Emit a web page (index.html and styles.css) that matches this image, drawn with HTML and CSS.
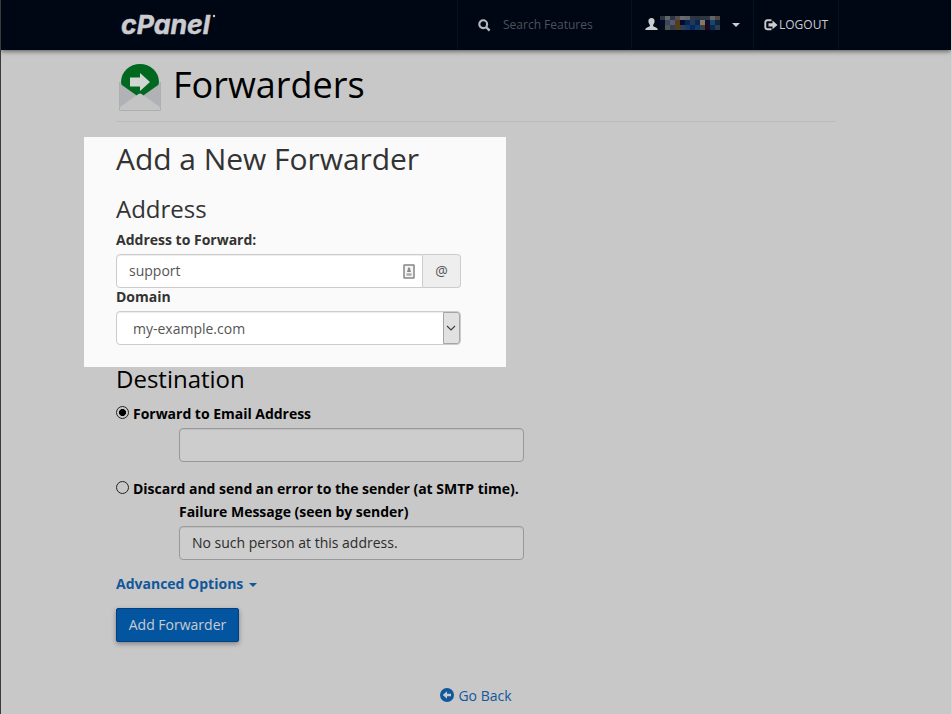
FILE: index.html
```html
<!DOCTYPE html>
<html lang="en">
<head>
<meta charset="utf-8">
<title>Forwarders</title>
<link rel="stylesheet" href="styles.css">
</head>
<body>
<header class="navbar">
  <svg class="logo" width="98" height="30" viewBox="0 0 98 30"><text x="1" y="24.500" textLength="89" lengthAdjust="spacingAndGlyphs">cPanel</text><circle cx="94" cy="7" r="1.200"/></svg>
  <div class="search">
    <svg width="13" height="13" viewBox="0 0 13 13"><circle cx="5.2" cy="5.2" r="3.9" fill="none" stroke="#b5b8bd" stroke-width="2.1"/><path d="M8 8l3.6 3.6" stroke="#b5b8bd" stroke-width="2.4"/></svg>
    <span>Search Features</span>
  </div>
  <div class="user">
    <svg width="13" height="12" viewBox="0 0 13 12"><path fill="#cbcccf" d="M6.500 0C8.600 0 9.800 1.400 9.600 3.400C9.400 5 8.700 6.200 8 7C8 8.300 8.800 8.700 10.300 9.200C12 9.800 12.700 10.300 12.700 12H.300C.300 10.300 1 9.800 2.700 9.200C4.200 8.700 5 8.300 5 7C4.300 6.200 3.600 5 3.400 3.400C3.200 1.400 4.400 0 6.500 0Z"/></svg>
    <svg class="mosaic" width="60" height="14" viewBox="0 0 12 14" preserveAspectRatio="none" shape-rendering="crispEdges">
      <g><path fill="#2b3340" d="M0 0h1v4H0zM7 0h1v4H7z"/><path fill="#616565" d="M1 0h1v4H1zM10 0h1v4h-1zM5 0h1v4H5z"/><path fill="#2c3647" d="M2 0h1v4H2zM8 0h2v4H8zM6 0h1v4H6z"/><path fill="#584b4d" d="M3 0h1v4H3z"/><path fill="#686c70" d="M4 0h1v4H4z"/><path fill="#50483e" d="M11 0h1v4h-1z"/></g>
      <g><path fill="#020b2c" d="M0 4h1v5H0zM4 4h1v5H4z"/><path fill="#3b4656" d="M1 4h1v5H1z"/><path fill="#515878" d="M2 4h1v5H2z"/><path fill="#573b12" d="M3 4h1v5H3z"/><path fill="#062653" d="M5 4h1v5H5zM7 4h1v5H7z"/><path fill="#243a54" d="M6 4h1v5H6z"/><path fill="#8b7759" d="M8 4h1v5H8z"/><path fill="#07112c" d="M9 4h1v5H9z"/><path fill="#1c436b" d="M10 4h1v5h-1z"/><path fill="#10243b" d="M11 4h1v5h-1z"/></g>
      <g><path fill="#050b1d" d="M0 9h1v5H0z"/><path fill="#4e5453" d="M1 9h1v5H1z"/><path fill="#343b4c" d="M2 9h1v5H2zM4 9h1v5H4z"/><path fill="#50401e" d="M3 9h1v5H3z"/><path fill="#123c68" d="M5 9h1v5H5zM7 9h1v5H7z"/><path fill="#08265c" d="M6 9h1v5H6z"/><path fill="#34414a" d="M8 9h1v5H8z"/><path fill="#20071c" d="M9 9h1v5H9z"/><path fill="#062b53" d="M10 9h1v5h-1z"/><path fill="#2b3c4c" d="M11 9h1v5h-1z"/></g>
    </svg>
    <i class="caret"></i>
  </div>
  <div class="logout">
    <svg width="14" height="12" viewBox="0 0 14 12"><path d="M7.500 1.300H3.500Q1.300 1.300 1.300 3.500v4.600Q1.300 10.300 3.500 10.300h4" fill="none" stroke="#cbcccf" stroke-width="1.900"/><path fill="#cbcccf" d="M4.500 4.200H8.500V1.500L13.500 5.900 8.500 10.200V7.500h-4z"/></svg>
    <span>LOGOUT</span>
  </div>
</header>
<main class="content">
  <div class="title">
    <svg width="42" height="48" viewBox="0 0 42 48"><path fill="#b7b9bb" d="M0 18h42v29H0z"/><path fill="#00691f" d="M2 18A19 18 0 0 1 40 18Q40 22 36 25L24 32H18L6 25Q2 22 2 18Z"/><path fill="#b0b2b5" d="M0 19L17 31 0 44z"/><path fill="#b0b2b5" d="M42 19L25 31 42 44z"/><path fill="#c4c4c5" d="M0 44L18 31Q21 28 24 31L42 44v3H0z"/><path fill="none" stroke="#adb0b1" d="M.500 18V46.500H41.500V18"/><path fill="#d2d6d3" d="M11 13.500h10V9l10 9-10 9v-4.500H11z"/></svg>
    <h1>Forwarders</h1>
  </div>
  <section class="panel">
    <h2>Add a New Forwarder</h2>
    <h3>Address</h3>
    <label>Address to Forward:</label>
    <div class="group">
      <div class="field">support
        <svg width="12" height="15" viewBox="0 0 12 15"><rect x="1" y="1" width="10" height="13" rx=".5" fill="#f5f5f5" stroke="#858585" stroke-width="1.500"/><circle cx="6" cy="4.800" r="1.200" fill="#888"/><path fill="#888" d="M4.700 5.500h2.600L8 8H4z"/><path fill="#aaa" d="M3.500 9.300h5v2.400h-5z"/></svg>
      </div>
      <div class="addon">@</div>
    </div>
    <label class="domain">Domain</label>
    <div class="select"><span>my-example.com</span><div class="arrow"><svg width="10" height="6" viewBox="0 0 10 6"><path d="M1 1l4 4 4-4" fill="none" stroke="#3c3c3c" stroke-width="1.100"/></svg></div></div>
  </section>
  <section class="destination">
    <h3>Destination</h3>
    <div class="option"><i class="radio checked"></i>Forward to Email Address</div>
    <div class="field indent"></div>
    <div class="option second"><i class="radio"></i>Discard and send an error to the sender (at SMTP time).</div>
    <div class="message">Failure Message (seen by sender)</div>
    <div class="field indent">No such person at this address.</div>
    <div class="advanced">Advanced Options<i class="caret"></i></div>
    <div class="submit">Add Forwarder</div>
    <div class="back"><svg width="14" height="14" viewBox="0 0 14 14"><circle cx="7" cy="7" r="7" fill="#11579b"/><path fill="#c8ccd0" d="M2.800 7L7 3.200V5.800h4v2.400H7v2.600z"/></svg>Go Back</div>
  </section>
</main>
</body>
</html>
```

FILE: styles.css
```css
* { box-sizing: border-box; }
body {
  margin: 0;
  height: 714px;
  overflow: hidden;
  border-left: 1px solid #3b3b3b;
  border-right: 1px solid #d2d2d2;
  background: #c8c8c8;
  color: #000;
  font: 14px/20px "Open Sans", "Noto Sans", sans-serif;
}
h1, h2, h3 { margin: 0; font-weight: 400; }
svg { flex: none; }
.navbar {
  display: flex;
  height: 50px;
  background: #000714;
  box-shadow: 0 1px 5px rgba(0, 0, 0, .6);
  color: #cbcccf;
}
.logo { margin: 9px 0 0 119px; fill: #cbcccf; }
.logo text {
  font: italic 700 26px Inter, "Open Sans", sans-serif;
  stroke: #cbcccf;
  stroke-width: .5px;
}
.search, .user, .logout {
  display: flex;
  align-items: center;
  height: 49px;
  border-left: 1px solid #021420;
}
.search { width: 174px; margin-left: 239px; padding-left: 20px; }
.search svg { margin-top: 1px; }
.search span { margin: 1px 0 0 12px; color: #4c5259; font-size: 12px; }
.user { width: 122px; padding-left: 13px; }
.user > svg:first-child { margin-top: -2px; }
.mosaic { margin: -3px 12px 0 2px; }
.caret { border: 4px solid transparent; border-top-color: currentColor; border-bottom: 0; }
.logout { width: 86px; padding-left: 10px; border-right: 1px solid #021420; }
.logout span { margin: 1px 0 0 1px; font-size: 12px; }
.content { width: 720px; margin-left: 115px; }
.title {
  display: flex;
  height: 72px;
  padding: 14px 0 0 3px;
  border-bottom: 1px solid #bcbcbc;
}
.title h1 { margin: 1px 0 0 12px; font-size: 36px; line-height: 40px; }
.panel {
  width: 422px;
  height: 230px;
  margin: 15px 0 0 -32px;
  padding: 5px 45px 0 32px;
  background: #fafafa;
  color: #333;
}
h2 { font-size: 30px; line-height: 33px; letter-spacing: -.04px; }
h3 { font-size: 24px; line-height: 26px; }
.panel h3 { margin: 21px 0 8px; }
label { display: block; font-weight: 700; }
.group { display: flex; margin: 4px 0 -1px; }
.field {
  display: flex;
  align-items: center;
  justify-content: space-between;
  height: 34px;
  padding: 0 12px;
  border: 1px solid #999;
  border-radius: 4px;
  background: #cdcdcd;
  box-shadow: inset 0 1px 1px rgba(0, 0, 0, .075);
  color: #2c2c2c;
}
.group .field {
  width: 307px;
  padding-right: 7px;
  border-color: #ccc;
  border-radius: 4px 0 0 4px;
  background: #fff;
  color: #555;
}
.addon {
  width: 38px;
  border: 1px solid #ccc;
  border-left: 0;
  border-radius: 0 4px 4px 0;
  background: #eee;
  color: #555;
  font-size: 14px;
  line-height: 32px;
  text-align: center;
}
.select {
  display: flex;
  align-items: center;
  justify-content: space-between;
  height: 34px;
  margin-top: 4px;
  padding-left: 16px;
  border: 1px solid #ccc;
  border-radius: 4px;
  background: #fff;
  box-shadow: inset 0 1px 1px rgba(0, 0, 0, .075);
  color: #555;
}
.select span { padding-top: 2px; }
.arrow {
  display: flex;
  align-items: center;
  justify-content: center;
  width: 17px;
  height: 32px;
  padding-right: 1px;
  border: 1px solid #a5a5a5;
  border-radius: 0 3px 3px 0;
  background: #e1e1e1;
}
.destination h3 { margin: -1px 0 12px; }
.option { display: flex; margin-bottom: 4px; font-weight: 700; letter-spacing: -.02px; }
.option.second { margin: 17px 0 3px; }
.radio {
  width: 13px;
  height: 13px;
  margin: 2px 4px 0 0;
  border: 1px solid #222;
  border-radius: 50%;
}
.radio.checked { background: radial-gradient(circle, #000 3.2px, transparent 3.8px); }
.indent { width: 345px; margin-left: 63px; }
.message { margin: 0 0 4px 63px; font-weight: 700; letter-spacing: -.02px; }
.advanced {
  display: flex;
  align-items: center;
  margin: 14px 0;
  color: #11579b;
  font-weight: 700;
}
.advanced .caret { margin: 2px 0 0 6px; }
.submit {
  width: 123px;
  height: 34px;
  border: 1px solid #003f80;
  border-radius: 2px;
  background: #04559f;
  box-shadow: 0 2px 5px rgba(0, 0, 0, .35);
  color: #c8ccd0;
  line-height: 32px;
  text-align: center;
}
.back {
  display: flex;
  justify-content: center;
  margin-top: 44px;
  color: #11579b;
}
.back svg { margin: 2px 4px 0 0; }
```
